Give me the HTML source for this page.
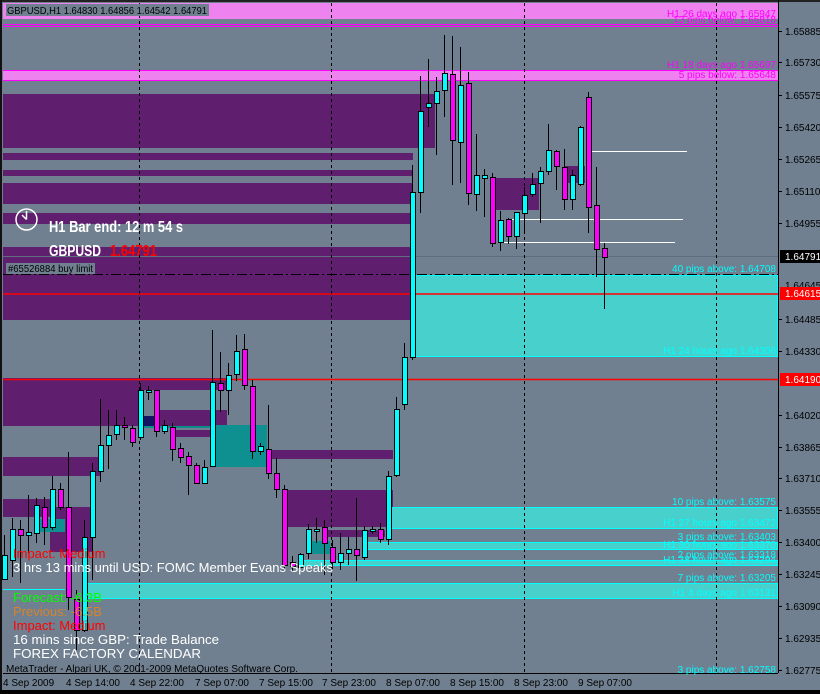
<!DOCTYPE html>
<html><head><meta charset="utf-8"><style>
html,body{margin:0;padding:0;background:#708090;width:820px;height:694px;overflow:hidden}
svg{display:block}
text{font-family:"Liberation Sans",sans-serif}
</style></head><body>
<svg id="s" width="820" height="694" xmlns="http://www.w3.org/2000/svg">
<rect width="820" height="694" fill="#708090"/>
<rect x="0" y="0" width="820" height="2" fill="#222"/>
<rect x="0" y="0" width="2" height="694" fill="#111"/>
<rect x="0" y="690" width="820" height="4" fill="#000"/>
<rect x="3" y="3" width="775" height="16" fill="#ee82ee"/>
<rect x="3" y="24" width="775" height="1" fill="#ff00ff"/>
<rect x="3" y="26" width="775" height="1" fill="#ff00ff"/>
<rect x="3" y="70" width="775" height="10" fill="#ee82ee"/>
<rect x="3" y="70" width="775" height="1" fill="#ff00ff"/>
<rect x="3" y="80" width="775" height="1" fill="#ff00ff"/>
<g fill="#5f1f6e">
<rect x="3" y="94" width="432" height="54"/>
<rect x="3" y="153" width="410" height="7"/>
<rect x="3" y="170" width="410" height="6"/>
<rect x="3" y="183" width="410" height="21"/>
<rect x="3" y="213" width="410" height="11"/>
<rect x="3" y="247" width="410" height="73"/>
<rect x="493" y="178" width="46" height="32"/>
<rect x="565" y="166" width="20" height="17"/>
<rect x="3" y="378" width="137" height="48"/>
<rect x="140" y="378" width="87" height="12"/>
<rect x="155" y="410" width="72" height="16"/>
<rect x="172" y="430" width="38" height="7"/>
<rect x="3" y="457" width="97" height="19"/>
<rect x="268" y="450" width="125" height="9"/>
<rect x="3" y="499" width="47" height="18"/>
<rect x="50" y="507" width="42" height="45"/>
<rect x="285" y="490" width="108" height="37"/>
<rect x="325" y="530" width="60" height="7"/>
</g>
<rect x="142" y="416" width="13" height="10" fill="#141464"/>
<rect x="140" y="426" width="73" height="2" fill="#0e8c8c"/>
<rect x="213" y="425" width="54" height="42" fill="#0e9090"/>
<rect x="40" y="519" width="25" height="13" fill="#0e9090"/>
<rect x="310" y="541" width="20" height="13" fill="#0e9090"/>
<g fill="#48d1cc" stroke="#00ffff" stroke-width="1">
<rect x="413.5" y="275.5" width="364" height="81"/>
<rect x="390.5" y="507.5" width="387" height="21"/>
<rect x="365.5" y="542.5" width="412" height="7"/>
<rect x="300.5" y="560.5" width="477" height="5"/>
<rect x="85.5" y="583.5" width="692" height="15"/>
</g>
<rect x="3" y="589" width="62" height="1" fill="#00ffff"/>
<line x1="3" y1="256.5" x2="778" y2="256.5" stroke="#5e6e7e" stroke-width="1"/>
<line x1="3" y1="274.5" x2="778" y2="274.5" stroke="#000" stroke-dasharray="10,3,2,3"/>
<line x1="3" y1="294" x2="778" y2="294" stroke="#ff0000" stroke-width="1.5"/>
<line x1="3" y1="379.5" x2="778" y2="379.5" stroke="#ff0000" stroke-width="1.5"/>
<g stroke="#000" stroke-dasharray="3,3" stroke-width="1">
<line x1="139.5" y1="3" x2="139.5" y2="673"/>
<line x1="331.5" y1="3" x2="331.5" y2="673"/>
<line x1="524.5" y1="3" x2="524.5" y2="673"/>
<line x1="716.5" y1="3" x2="716.5" y2="673"/>
</g>
<g stroke="#fff" stroke-width="1">
<line x1="588" y1="151.5" x2="687" y2="151.5"/>
<line x1="507" y1="219.5" x2="683" y2="219.5"/>
<line x1="499" y1="242.5" x2="675" y2="242.5"/>
</g>
<g id="c"></g>
<line x1="778.5" y1="0" x2="778.5" y2="673" stroke="#000"/>
<line x1="3" y1="673.5" x2="778" y2="673.5" stroke="#000"/>
<g stroke="#000">
<line x1="778" y1="31.5" x2="782" y2="31.5"/><line x1="778" y1="62.5" x2="782" y2="62.5"/><line x1="778" y1="95.5" x2="782" y2="95.5"/>
<line x1="778" y1="127.5" x2="782" y2="127.5"/><line x1="778" y1="159.5" x2="782" y2="159.5"/><line x1="778" y1="191.5" x2="782" y2="191.5"/>
<line x1="778" y1="223.5" x2="782" y2="223.5"/><line x1="778" y1="319.5" x2="782" y2="319.5"/><line x1="778" y1="351.5" x2="782" y2="351.5"/>
<line x1="778" y1="415.5" x2="782" y2="415.5"/><line x1="778" y1="447.5" x2="782" y2="447.5"/><line x1="778" y1="478.5" x2="782" y2="478.5"/>
<line x1="778" y1="510.5" x2="782" y2="510.5"/><line x1="778" y1="542.5" x2="782" y2="542.5"/><line x1="778" y1="574.5" x2="782" y2="574.5"/>
<line x1="778" y1="606.5" x2="782" y2="606.5"/><line x1="778" y1="638.5" x2="782" y2="638.5"/><line x1="778" y1="670.5" x2="782" y2="670.5"/>
</g>
<g font-size="10" fill="#000">
<text x="785" y="35">1.65885</text><text x="785" y="66">1.65730</text><text x="785" y="99">1.65575</text>
<text x="785" y="131">1.65420</text><text x="785" y="163">1.65265</text><text x="785" y="195">1.65110</text>
<text x="785" y="227">1.64955</text><text x="785" y="289">1.64645</text><text x="785" y="323">1.64485</text>
<text x="785" y="355">1.64330</text><text x="785" y="419">1.64020</text><text x="785" y="451">1.63865</text>
<text x="785" y="482">1.63710</text><text x="785" y="514">1.63555</text><text x="785" y="546">1.63400</text>
<text x="785" y="578">1.63245</text><text x="785" y="610">1.63090</text><text x="785" y="642">1.62935</text>
<text x="785" y="674">1.62775</text>
</g>
<rect x="780" y="250" width="40" height="13" fill="#000"/><text x="785" y="260" font-size="10" fill="#fff">1.64791</text>
<rect x="780" y="287" width="40" height="13" fill="#ff0000"/><text x="785" y="297" font-size="10" fill="#fff">1.64615</text>
<rect x="780" y="373" width="40" height="13" fill="#ff0000"/><text x="785" y="383" font-size="10" fill="#fff">1.64190</text>
<g font-size="10" fill="#000">
<text x="3" y="686">4 Sep 2009</text><text x="66" y="686">4 Sep 14:00</text><text x="130" y="686">4 Sep 22:00</text>
<text x="195" y="686">7 Sep 07:00</text><text x="259" y="686">7 Sep 15:00</text><text x="322" y="686">7 Sep 23:00</text>
<text x="386" y="686">8 Sep 07:00</text><text x="450" y="686">8 Sep 15:00</text><text x="514" y="686">8 Sep 23:00</text>
<text x="578" y="686">9 Sep 07:00</text>
</g>
<g font-size="10" text-anchor="end">
<text x="776" y="17" fill="#ff00ff">H1 26 days ago 1.65947</text>
<text x="776" y="23" fill="#ff00ff">13 pips below: 1.65818</text>
<text x="776" y="68" fill="#ff00ff">H1 18 days ago 1.65697</text>
<text x="776" y="78" fill="#ff00ff">5 pips below: 1.65648</text>
<text x="776" y="272" fill="#00ffff">40 pips above: 1.64708</text>
<text x="776" y="354" fill="#00ffff">H1 24 hours ago 1.64306</text>
<text x="776" y="505" fill="#00ffff">10 pips above: 1.63575</text>
<text x="776" y="526" fill="#00ffff">H1 27 hours ago 1.63472</text>
<text x="776" y="540" fill="#00ffff">3 pips above: 1.63403</text>
<text x="776" y="548" fill="#00ffff">H1 30 hours ago 1.63370</text>
<text x="776" y="558" fill="#00ffff">2 pips above: 1.63318</text>
<text x="776" y="563" fill="#00ffff">H1 38 hours ago 1.63294</text>
<text x="776" y="581" fill="#00ffff">7 pips above: 1.63205</text>
<text x="776" y="596" fill="#00ffff">H1 4 days ago 1.63131</text>
<text x="776" y="673" fill="#00ffff">3 pips above: 1.62758</text>
</g>
<rect x="6" y="4" width="203" height="12" fill="#708090"/>
<text x="7" y="14" font-size="10.5" fill="#000" textLength="200" lengthAdjust="spacingAndGlyphs">GBPUSD,H1  1.64830 1.64856 1.64542 1.64791</text>
<rect x="6" y="263" width="89" height="11" fill="#708090"/>
<text x="8" y="272" font-size="10" fill="#000" textLength="85" lengthAdjust="spacingAndGlyphs">#65526884 buy limit</text>
<circle cx="26.5" cy="219.5" r="10.5" fill="none" stroke="#fff" stroke-width="1.5"/>
<line x1="26.5" y1="219.5" x2="26.5" y2="211" stroke="#fff" stroke-width="1.5"/>
<line x1="26.5" y1="219.5" x2="22" y2="215" stroke="#fff" stroke-width="1.5"/>
<text x="49" y="232" font-size="16" font-weight="bold" fill="#fff" textLength="134" lengthAdjust="spacingAndGlyphs">H1 Bar end: 12 m 54 s</text>
<text x="49" y="256" font-size="16" font-weight="bold" fill="#fff" textLength="52" lengthAdjust="spacingAndGlyphs">GBPUSD</text>
<text x="110" y="256" font-size="16" font-weight="bold" fill="#ff0000" textLength="47" lengthAdjust="spacingAndGlyphs">1.64791</text>
<g font-size="13">
<text x="13" y="558" fill="#ff0000">Impact: Medium</text>
<text x="13" y="572" fill="#fff" textLength="320" lengthAdjust="spacingAndGlyphs">3 hrs 13 mins until USD: FOMC Member Evans Speaks</text>
<text x="13" y="602" fill="#00ff00">Forecast: -6.3B</text>
<text x="13" y="616" fill="#d2842e">Previous: -6.5B</text>
<text x="13" y="630" fill="#ff0000">Impact: Medium</text>
<text x="13" y="644" fill="#fff" textLength="206" lengthAdjust="spacingAndGlyphs">16 mins since GBP: Trade Balance</text>
<text x="13" y="658" fill="#fff" textLength="188" lengthAdjust="spacingAndGlyphs">FOREX FACTORY CALENDAR</text>
</g>
<text x="6" y="672" font-size="10" fill="#000" textLength="292" lengthAdjust="spacingAndGlyphs">MetaTrader - Alpari UK, © 2001-2009 MetaQuotes Software Corp.</text>
</svg>
<script>
var d=[
[1,555,579,535,580],[1,529,560,518,577],[0,529,535,520,583],[1,532,535,495,553],[1,505,533,498,543],
[0,507,527,497,545],[1,489,527,476,530],[0,489,507,483,510],[0,507,597,452,610],[0,599,630,590,650],
[1,537,630,520,632],[1,471,537,463,580],[1,445,471,399,482],[1,435,445,410,469],[1,425,434,410,440],
[0,425,427,417,440],[0,428,442,425,447],[1,390,437,383,440],[1,390,391,386,400],[0,390,431,390,437],
[1,425,431,420,434],[0,427,449,423,461],[0,448,457,443,463],[0,456,465,452,495],[0,465,483,463,484],
[1,467,483,460,484],[1,382,466,330,466],[0,383,390,352,412],[1,375,390,363,415],[1,351,374,335,381],
[0,349,385,334,390],[0,386,451,380,459],[1,446,451,443,455],[0,449,473,405,479],[0,473,489,458,498],
[0,489,565,485,570],[0,562,566,556,572],[1,554,567,553,568],[1,529,553,524,559],[1,529,531,518,543],
[0,527,543,520,575],[0,547,562,540,570],[1,553,562,533,570],[1,549,553,537,565],[0,549,555,498,581],
[1,530,557,526,560],[1,529,531,526,534],[0,529,539,523,543],[1,476,539,471,545],[1,409,475,397,477],
[1,357,404,343,410],[1,192,357,165,360],[1,111,192,76,213],[1,103,107,59,127],[1,91,103,77,155],
[1,73,90,35,117],[0,74,140,36,185],[1,85,142,47,183],[0,83,193,72,205],[1,175,194,134,211],
[1,175,178,169,217],[0,177,243,173,247],[1,220,242,211,251],[0,219,236,218,244],[1,212,236,212,249],
[1,195,213,187,232],[1,184,194,173,197],[1,171,183,167,223],[1,150,171,124,175],[0,151,166,150,190],
[0,167,199,149,210],[1,175,199,170,210],[1,127,184,126,186],[0,97,207,92,233],[0,205,249,167,277],
[0,248,257,243,309]];
var g=document.getElementById('c'),h='';
d.forEach(function(c,i){var x=4+8*i;var top=c[1],bot=c[2];if(bot-top<2)bot=top+2;
h+='<line x1="'+(x+.5)+'" y1="'+c[3]+'" x2="'+(x+.5)+'" y2="'+c[4]+'" stroke="#000"/>';
h+='<rect x="'+(x-2+.5)+'" y="'+(top+.5)+'" width="5" height="'+(bot-top)+'" fill="'+(c[0]?'#00ffff':'#ff00ff')+'" stroke="#000"/>';});
g.innerHTML=h;
</script>
</body></html>
